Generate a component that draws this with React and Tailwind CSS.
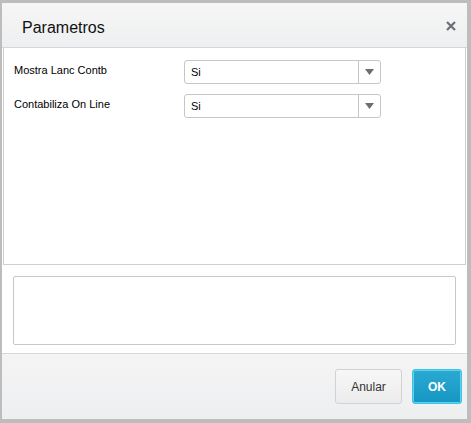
import React from 'react';

const font = { fontFamily: '"Liberation Sans", Arial, sans-serif' };

function SelectBox({ value }) {
    return (
        <div className="flex h-[24px] w-[197px] items-stretch rounded-[3px] border border-[#c6c6c6] bg-white">
            <div className="flex flex-1 items-center pl-[6px] text-[11px] text-black">{value}</div>
            <div className="flex w-[22px] items-center justify-center border-l border-[#c6c6c6]">
                <svg width="9" height="6" viewBox="0 0 9 6">
                    <path d="M0 0 L9 0 L4.5 6 Z" fill="#6b6f75" />
                </svg>
            </div>
        </div>
    );
}

function ParamRow({ label, value }) {
    return (
        <div className="flex items-start">
            <div className="w-[180px] pl-[10px] pt-[2px] text-[11px] text-black">{label}</div>
            <SelectBox value={value} />
        </div>
    );
}

export default function App() {
    return (
        <div className="flex h-[423px] w-[471px] bg-[#bdbdbd] pb-[4px] pl-[2px] pr-[4px] pt-[3px]" style={font}>
            <div className="flex flex-1 flex-col bg-white">
                {/* Header */}
                <div className="flex h-[45px] items-center justify-between border-b border-[#d4d6d8] bg-gradient-to-b from-[#f6f6f6] to-[#eeeff0] pl-[20px] pr-[11px]">
                    <span className="pt-[6px] text-[16px] text-[#111]">Parametros</span>
                    <svg width="10" height="10" viewBox="0 0 10 10" className="mt-[2px]">
                        <path d="M1 1 L9 9 M9 1 L1 9" stroke="#6b6f75" strokeWidth="2.2" />
                    </svg>
                </div>

                {/* Body */}
                <div className="mx-[1px] flex h-[217px] flex-col gap-[10px] border border-t-0 border-[#cfcfcf] pt-[12px]">
                    <ParamRow label="Mostra Lanc Contb" value="Si" />
                    <ParamRow label="Contabiliza On Line" value="Si" />
                </div>

                <div className="mx-[11px] mt-[11px] h-[69px] rounded-[2px] border border-[#c8c8c8] bg-white"></div>

                {/* Footer */}
                <div className="mt-[8px] flex flex-1 items-start justify-end gap-[10px] border-t border-[#d8d8d8] bg-gradient-to-b from-[#f4f4f4] to-[#eeeff1] pr-[5px] pt-[15px]">
                    <button className="flex h-[35px] w-[67px] items-center justify-center rounded-[3px] border border-[#d2d2d2] bg-gradient-to-b from-[#f7f7f7] to-[#ececec] text-[12px] text-[#333]">
                        Anular
                    </button>
                    <button className="flex h-[35px] w-[50px] items-center justify-center rounded-[3px] border border-[#3fc4e6] bg-gradient-to-b from-[#2aa9d2] to-[#1497c3] text-[12px] font-bold text-white shadow-[inset_0_0_0_1px_#5fd0ee]">
                        OK
                    </button>
                </div>
            </div>
        </div>
    );
}
